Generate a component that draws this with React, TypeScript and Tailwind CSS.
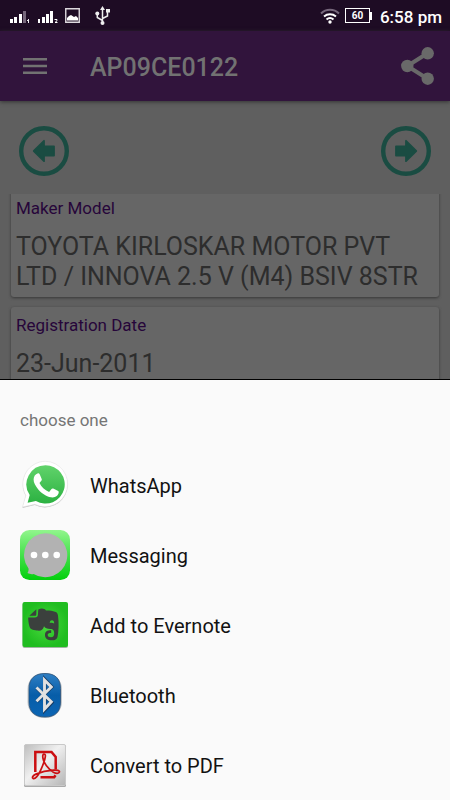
import type { ReactNode } from "react";

function StatusBar() {
  return (
    <div className="flex h-[31px] shrink-0 items-center justify-between bg-[#1e0c24] pr-2 pl-2.5 text-white">
      <div className="flex items-center">
        <svg width="20" height="14" viewBox="0 0 20 14" fill="#fff" aria-hidden="true">
          <path d="M0 10h3v4H0zM4 8h3v6H4zM9 5h3v9H9z" />
          <path d="M13 2h3v12h-3z" fill="#76677b" />
          <path d="M18 10h1v4h-1zM17 11h1v1h-1z" fill="#f0eef1" />
        </svg>
        <svg className="ml-2" width="20" height="14" viewBox="0 0 20 14" fill="#fff" aria-hidden="true">
          <path d="M0 10h2v4H0zM4 8h3v6H4zM8 5h3v9H8zM12 2h3v12h-3z" />
          <path d="M16.500 10.500H19v1.200l-2 1.800h2.500" fill="none" stroke="#fff" strokeWidth="1" />
        </svg>
        <svg className="ml-[7px]" width="15" height="15" viewBox="0 0 15 15" aria-hidden="true">
          <path d="M.75.75h13.500v13.500H.75z" fill="none" stroke="#ddd9de" strokeWidth="1.400" />
          <path d="M2 12.500V10l2-2 2-1 3 2 2-1 2 2v2.500z" fill="#fff" />
        </svg>
        <svg className="ml-[15px]" width="15" height="19" viewBox="0 0 15 19" aria-hidden="true">
          <path d="M7.500 2v15M7.500 14.500 2.300 11.500V7.500M7.500 12.500l5-2.500V5" fill="none" stroke="#eee" strokeWidth="1.500" />
          <path d="M7.500 0 10 4H5zM11 3h4v3.500h-4z" fill="#eee" />
          <circle cx="2.300" cy="7.500" r="2" fill="#eee" />
          <circle cx="7.500" cy="17" r="2" fill="#eee" />
        </svg>
      </div>
      <div className="flex items-center">
        <svg width="20" height="16" viewBox="0 0 20 16" fill="none" strokeWidth="2" aria-hidden="true">
          <path d="M1 5.500C6 .5 14 .5 19 5.500" stroke="#76677b" />
          <path d="M4 8.500c3.500-3 8.500-3 12 0M6.500 11.500c2-1.700 5-1.700 7 0" stroke="#fff" />
          <circle cx="10" cy="14" r="1.700" fill="#fff" />
        </svg>
        <div className="ml-[5px] flex h-[15px] w-[25px] items-center justify-center border border-white text-[10px] font-bold">60</div>
        <div className="h-2 w-0.5 bg-white" />
        <span className="ml-2 pt-0.5 text-[17px] leading-5 font-medium">6:58 pm</span>
      </div>
    </div>
  );
}

function CircleArrow({ label, flip = false }: { label: string; flip?: boolean }) {
  return (
    <button type="button" aria-label={label} className={flip ? "-scale-x-100" : ""}>
      <svg width="50" height="50" viewBox="0 0 50 50" aria-hidden="true">
        <circle cx="25" cy="25" r="22.800" fill="none" stroke="#1a4c42" strokeWidth="4.400" />
        <path d="M14.800 25 25 14.800V20.500h10v9H25v5.700z" fill="#1a4c42" stroke="#1a4c42" strokeWidth="1.800" strokeLinejoin="round" />
      </svg>
    </button>
  );
}

function InfoCard({ label, value }: { label: string; value: string }) {
  return (
    <section className="shrink-0 rounded-[3px] bg-[#666666] px-[5px] pt-2 pb-[5px] shadow-[0_1px_3px_#383838]">
      <h2 className="text-[17px] leading-5 text-[#26053a]">{label}</h2>
      <p className="mt-3.5 text-[25px] leading-[30px] text-[#2d2d2d]">{value}</p>
    </section>
  );
}

function WhatsAppIcon() {
  return (
    <svg width="50" height="50" viewBox="0 0 50 50" aria-hidden="true">
      <defs>
        <linearGradient id="wa" x2="0" y2="1">
          <stop stopColor="#61d36b" />
          <stop offset="1" stopColor="#2bb141" />
        </linearGradient>
      </defs>
      <path d="M25.500 2a22.700 22.700 0 1 1-10.700 43L2.500 48l3.300-12A22.800 22.800 0 0 1 25.500 2z" fill="#c3c3c3" />
      <path d="M25.500 1.300a22.700 22.700 0 1 1-10.700 43L2.500 47l3.300-11.600A22.800 22.800 0 0 1 25.500 1.300z" fill="#fff" stroke="#e2e2e2" strokeWidth=".6" />
      <path d="M25.500 5.200a19.200 19.200 0 1 1-9.600 35.800L7.600 42.800l2.100-7.700A19.200 19.200 0 0 1 25.500 5.200z" fill="url(#wa)" />
      <path d="M18 13.300c.8 0 1.400.3 1.800 1.200l1.900 4.500c.3.800 0 1.300-.4 1.800l-1.800 2.300c1.800 3.900 5.200 7.100 9.600 8.800l2.400-2.900c.5-.6 1-.7 1.700-.4l4.500 2.200c.9.400 1.100.8 1 1.700-.2 2.600-2.900 4.900-6 4.900-4.200 0-10.600-3.500-14.400-8-2.900-3.400-4.700-6.800-4.700-9.900 0-2.800 1.600-5.400 4.400-6.200z" fill="#fff" />
    </svg>
  );
}

function MessagingIcon() {
  return (
    <svg width="50" height="50" viewBox="0 0 50 50" aria-hidden="true">
      <defs>
        <linearGradient id="ms" x2="0" y2="1">
          <stop stopColor="#92f58d" />
          <stop offset=".5" stopColor="#44e14b" />
          <stop offset="1" stopColor="#03cf0d" />
        </linearGradient>
      </defs>
      <rect width="50" height="50" rx="9.500" fill="url(#ms)" />
      <path d="M25.200 3.200a22 22 0 1 1-11.500 40.700c-1.500.4-3.700.4-6.200-.8 1-1.800 1.300-3.300 1-4.600A22 22 0 0 1 25.200 3.200z" fill="#b2b2b2" />
      <circle cx="14" cy="25" r="3.300" fill="#fff" />
      <circle cx="25.300" cy="25" r="3.300" fill="#fff" />
      <circle cx="36.700" cy="25" r="3.300" fill="#fff" />
    </svg>
  );
}

function EvernoteIcon() {
  return (
    <svg width="50" height="50" viewBox="0 0 50 50" aria-hidden="true">
      <defs>
        <radialGradient id="en">
          <stop stopColor="#49da3d" />
          <stop offset="1" stopColor="#20bd20" />
        </radialGradient>
      </defs>
      <rect x="2.500" y="3" width="45.500" height="45" rx="2" fill="#a4b5a4" />
      <rect x="2.500" y="2" width="45.500" height="45" rx="2" fill="url(#en)" />
      <path d="M18.300 9.500c3-1.600 6.200-1.200 7.700 1 3.500-.1 6.500.4 9 1.200 2 .6 2.700 1.800 3 3.800 1 7.500.8 15.500-.5 21.500-.6 2.500-2.500 3.300-5.500 3.300-4.700 0-7-2-7-5.300s2-4.700 6.200-4.700v2.700c-2.400 0-3.500.6-3.500 2 0 1.600 1.300 2.200 3.300 2.200 2.300 0 3.200-1.100 3.200-3.600 0-3.200-.8-4.400-4-4.600-3-.2-5.200-1-6.200-2.800-.9 3.600-2.700 4.900-7 4.300-4.600-.6-7-1.400-7.700-4.500-.8-3-1.100-6-1.100-8.500h6.500c2.200 0 3.200-1 3.200-3z" fill="#3b403d" />
      <path d="m9.300 15.800 7-6.500v5c0 1-.5 1.500-1.300 1.500z" fill="#3b403d" />
      <path d="M29.700 23c.2-2 1-2.700 2.300-2.700s2.200 1.200 2.200 3.100c-1.500-.7-3-.7-4.500-.4z" fill="#38c833" />
    </svg>
  );
}

function BluetoothIcon() {
  return (
    <svg width="50" height="50" viewBox="0 0 50 50" aria-hidden="true">
      <defs>
        <linearGradient id="bt" x2="0" y2="1">
          <stop stopColor="#2f7fc4" />
          <stop offset=".5" stopColor="#075da8" />
          <stop offset="1" stopColor="#0b65b4" />
        </linearGradient>
      </defs>
      <rect x="7.500" y="3" width="34.500" height="45" rx="16" fill="#8d9399" opacity=".5" />
      <path d="M25 3.500c10.500 0 15.500 5.500 15.500 15V32c0 9.500-5 15-15.500 15S9 41.500 9 32V18.500c0-9.500 5.500-15 16-15z" fill="url(#bt)" stroke="#27517a" strokeWidth=".8" />
      <path d="m16.800 18 15 14.500-7 7.500V9.500l7 7.500-15 14.500" fill="none" stroke="#173d66" strokeWidth="3.600" />
      <path d="m16.500 17.500 14.800 14.300-6.800 7.200V10l6.800 7-14.800 14.300" fill="none" stroke="#e1e1e1" strokeWidth="2.900" />
    </svg>
  );
}

function PdfIcon() {
  return (
    <svg width="50" height="50" viewBox="0 0 50 50" aria-hidden="true">
      <defs>
        <linearGradient id="pd" x2="1" y2="1">
          <stop stopColor="#bdbdbd" />
          <stop offset=".45" stopColor="#f0f0f0" />
          <stop offset="1" stopColor="#b5b5b5" />
        </linearGradient>
      </defs>
      <rect x="4" y="5" width="42" height="42" rx="1.500" fill="#aaa" />
      <rect x="4.500" y="4.500" width="41" height="41" rx="1.500" fill="url(#pd)" stroke="#c9c9c9" />
      <g fill="none" stroke="#cb0f12">
        <path d="M15.300 32V12h16.200l4.200 5v12.500M20.500 37.200h13.700l1.300-2" strokeWidth="2.500" />
        <path d="M24.400 14.200c-1.500-.5-1.900 1.200-1.500 3.800.7 4.800 5.300 11.200 10.500 14.200 2.800 1.500 5.500 1.500 6-.1.500-1.700-2.500-2.200-6-2-6.200.4-12.800 2-17.500 4-3.300 1.400-4 3.500-2.800 4.300 1.800 1.100 5-2.500 7.500-8 2.500-5.600 4.300-10.500 4.700-13.600.2-1.600 0-2.500-.9-2.600z" strokeWidth="1.700" />
      </g>
    </svg>
  );
}

const targets: { name: string; icon: ReactNode }[] = [
  { name: "WhatsApp", icon: <WhatsAppIcon /> },
  { name: "Messaging", icon: <MessagingIcon /> },
  { name: "Add to Evernote", icon: <EvernoteIcon /> },
  { name: "Bluetooth", icon: <BluetoothIcon /> },
  { name: "Convert to PDF", icon: <PdfIcon /> },
];

export default function App() {
  return (
    <div className="flex h-screen flex-col overflow-hidden bg-[#5f5f5f] font-['Roboto',sans-serif]">
      <StatusBar />
      <header className="z-10 flex h-[70px] shrink-0 items-center bg-[#31143c] pr-4 pl-[23px] text-[#727272] shadow-[0_1px_4px_#333333]">
        <button type="button" aria-label="Open menu">
          <svg width="24" height="16" viewBox="0 0 24 16" fill="currentColor" aria-hidden="true">
            <path d="M0 0h24v2.500H0zM0 6.700h24v2.600H0zM0 13.400h24V16H0z" />
          </svg>
        </button>
        <h1 className="ml-[43px] flex-1 pt-1 text-[25px] leading-8 font-medium">AP09CE0122</h1>
        <button type="button" aria-label="Share">
          <svg width="33" height="38" viewBox="0 0 33 38" fill="#696969" aria-hidden="true">
            <path d="M26.500 6.300 6.300 19l20.200 12.700" fill="none" stroke="#696969" strokeWidth="4" />
            <circle cx="26.700" cy="6.300" r="6.200" />
            <circle cx="6.300" cy="19" r="6.200" />
            <circle cx="26.700" cy="31.700" r="6.200" />
          </svg>
        </button>
      </header>
      <main className="flex min-h-0 flex-1 flex-col overflow-hidden">
        <nav aria-label="Records" className="flex h-[93px] shrink-0 items-center justify-between px-[19px] pt-1.5">
          <CircleArrow label="Previous" />
          <CircleArrow label="Next" flip />
        </nav>
        <div className="min-h-0 flex-1 overflow-hidden px-[11px]">
          <div className="-mt-1 flex flex-col gap-2.5">
            <InfoCard label="Maker Model" value="TOYOTA KIRLOSKAR MOTOR PVT LTD / INNOVA 2.5 V (M4) BSIV 8STR" />
            <InfoCard label="Registration Date" value="23-Jun-2011" />
          </div>
        </div>
      </main>
      <div role="dialog" aria-labelledby="chooser-title" className="shrink-0 border-t border-black bg-[#fafafa]">
        <h2 id="chooser-title" className="flex h-[70px] items-center px-5 pt-3 text-[17px] text-[#757575]">choose one</h2>
        <ul>
          {targets.map((target) => (
            <li key={target.name}>
              <button type="button" className="flex h-[70px] w-full items-center gap-5 px-5 text-left text-[20px] text-[#121212]">
                {target.icon}
                <span className="pt-0.5">{target.name}</span>
              </button>
            </li>
          ))}
        </ul>
      </div>
    </div>
  );
}
